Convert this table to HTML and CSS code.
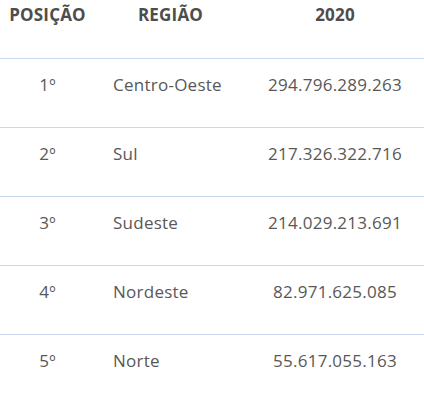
FILE: index.html
```html
<!DOCTYPE html>
<html lang="pt-BR">
<head>
<meta charset="utf-8">
<link rel="stylesheet" href="styles.css">
</head>
<body>
<table class="ranking">
  <colgroup>
    <col class="c-pos">
    <col class="c-reg">
    <col class="c-val">
  </colgroup>
  <thead>
    <tr>
      <th>POSIÇÃO</th>
      <th>REGIÃO</th>
      <th>2020</th>
    </tr>
  </thead>
  <tbody>
    <tr><td class="pos">1º</td><td class="reg">Centro-Oeste</td><td class="val">294.796.289.263</td></tr>
    <tr><td class="pos">2º</td><td class="reg">Sul</td><td class="val">217.326.322.716</td></tr>
    <tr><td class="pos">3º</td><td class="reg">Sudeste</td><td class="val">214.029.213.691</td></tr>
    <tr><td class="pos">4º</td><td class="reg">Nordeste</td><td class="val">82.971.625.085</td></tr>
    <tr><td class="pos">5º</td><td class="reg">Norte</td><td class="val">55.617.055.163</td></tr>
  </tbody>
</table>
</body>
</html>
```

FILE: styles.css
```css
html, body {
  margin: 0;
  padding: 0;
  background: #ffffff;
}
body {
  font-family: "Open Sans", "Liberation Sans", sans-serif;
  color: #585858;
}
.ranking {
  width: 424px;
  border-collapse: collapse;
  table-layout: fixed;
}
.c-pos { width: 95px; }
.c-reg { width: 151px; }
.c-val { width: 178px; }
.ranking th {
  font-size: 17px;
  line-height: 20px;
  font-weight: 700;
  color: #4d4d4d;
  text-align: center;
  letter-spacing: 0.2px;
  padding: 5px 0 33px;
  border-bottom: 1px solid #c9d7ef;
}
.ranking td {
  font-size: 17px;
  line-height: 20px;
  font-weight: 400;
  letter-spacing: 0.25px;
  padding: 16px 0 32px;
  border-bottom: 1px solid #c9d7ef;
}
.ranking tbody tr:last-child td {
  border-bottom: none;
}
.pos, .val { text-align: center; }
.reg { text-align: left; padding-left: 18px !important; }
```
